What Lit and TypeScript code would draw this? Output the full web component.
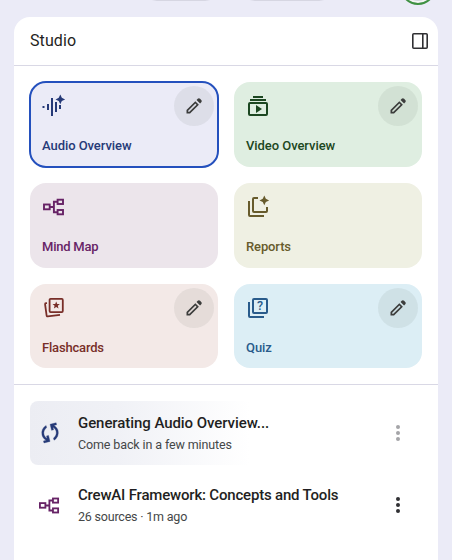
import { LitElement, html, css, svg } from "lit";
import { customElement } from "lit/decorators.js";
import { classMap } from "lit/directives/class-map.js";

const spark = (cx: number, cy: number, r: number) => {
  const k = r * 0.32;
  return svg`<path fill="currentColor" d="M${cx} ${cy - r}L${cx + k} ${cy - k}L${cx + r} ${cy}L${cx + k} ${cy + k}L${cx} ${cy + r}L${cx - k} ${cy + k}L${cx - r} ${cy}L${cx - k} ${cy - k}Z"/>`;
};

const icons = {
  audio: svg`<g fill="currentColor"><rect x=".5" y="12" width="2" height="2"/><rect x="5" y="10" width="2" height="6"/><rect x="9" y="4" width="2" height="18"/><rect x="13" y="8" width="2" height="10"/><rect x="17" y="11" width="2" height="4"/></g>${spark(18.3, 5.4, 4.8)}`,
  video: svg`<g fill="currentColor"><rect x="7" y="2" width="10" height="2"/><rect x="4" y="5" width="16" height="2"/><path d="M10 11v8l6-4Z"/></g><rect x="3" y="9" width="18" height="12" rx="1" fill="none" stroke="currentColor" stroke-width="2"/>`,
  mindmap: svg`<g fill="none" stroke="currentColor" stroke-width="1.9"><rect x="2" y="9.5" width="5.7" height="4.8"/><rect x="15.6" y="4.7" width="5.4" height="4.3"/><rect x="15.6" y="15" width="5.4" height="4.3"/><path d="M7.7 12h4.2M15.6 6.8h-3.7v10.4h3.7"/></g>`,
  reports: svg`<path fill="none" stroke="currentColor" stroke-width="2" d="M3 6v14q0 1 1 1h14M12 3H8q-1 0-1 1v12q0 1 1 1h12q1 0 1-1v-4"/>${spark(18.3, 5.4, 4.8)}`,
  flashcards: svg`<g fill="none" stroke="currentColor" stroke-width="1.8"><rect x="7.6" y="2.9" width="13.2" height="13.2" rx="1"/><path d="M5 7.1 4 7.2q-1 .1-.9 1.1l1.5 11.2q.1 1 1.1.9L18 18.9"/></g><path fill="currentColor" d="m14.2 5.4 1 2.6 2.7.1-2.1 1.7.7 2.7-2.3-1.5-2.3 1.5.7-2.7-2.1-1.7 2.7-.1Z"/>`,
  quiz: svg`<path fill="none" stroke="currentColor" stroke-width="2" d="M3 6v14q0 1 1 1h14"/><rect x="7" y="3" width="14" height="14" rx="1" fill="none" stroke="currentColor" stroke-width="2"/><text x="14" y="14.4" text-anchor="middle" font-family="Roboto, sans-serif" font-size="12.5" font-weight="500" fill="currentColor">?</text>`,
  edit: svg`<path fill="currentColor" d="M5 19h1.4l8.625-8.625-1.4-1.4L5 17.6ZM19.3 8.925l-4.25-4.2 1.4-1.4q.575-.575 1.413-.575.837 0 1.412.575l1.4 1.4q.575.575.6 1.388.025.812-.55 1.387ZM17.85 10.4 7.25 21H3v-4.25l10.6-10.6Z"/>`,
  panel: svg`<g fill="none" stroke="currentColor" stroke-width="1.6"><rect x="4.8" y="4.8" width="14.4" height="14.4" rx="1"/><path d="M14.8 5v14"/></g>`,
  more: svg`<g fill="currentColor"><circle cx="12" cy="6" r="2"/><circle cx="12" cy="12" r="2"/><circle cx="12" cy="18" r="2"/></g>`,
  sync: svg`<path fill="currentColor" stroke="currentColor" stroke-width=".3" transform="rotate(-14 12 12) translate(-.4 -.6) scale(1.04)" d="M4 20v-2h2.75l-.4-.35q-1.3-1.15-1.825-2.625Q4 13.55 4 12.05q0-2.775 1.663-4.937Q7.325 4.95 10 4.25v2.1Q8.2 7 7.1 8.562 6 10.125 6 12.05q0 1.125.425 2.187Q6.85 15.3 7.75 16.2l.25.25V14h2v6Zm10-.25v-2.1q1.8-.65 2.9-2.212Q18 13.875 18 11.95q0-1.125-.425-2.188Q17.15 8.7 16.25 7.8L16 7.55V10h-2V4h6v2h-2.75l.4.35q1.225 1.225 1.788 2.662Q20 10.45 20 11.95q0 2.775-1.663 4.938Q16.675 19.05 14 19.75Z"/>`,
};

type IconName = keyof typeof icons;

const icon = (name: IconName, cls = "") =>
  html`<svg class="icon ${cls}" viewBox="0 0 24 24" aria-hidden="true">${icons[name]}</svg>`;

interface Tool {
  id: IconName;
  label: string;
  editable: boolean;
}

const tools: Tool[] = [
  { id: "audio", label: "Audio Overview", editable: true },
  { id: "video", label: "Video Overview", editable: true },
  { id: "mindmap", label: "Mind Map", editable: false },
  { id: "reports", label: "Reports", editable: false },
  { id: "flashcards", label: "Flashcards", editable: true },
  { id: "quiz", label: "Quiz", editable: true },
];

@customElement("app-root")
export class AppRoot extends LitElement {
  static properties = { selected: { type: String } };

  declare selected: string;

  constructor() {
    super();
    this.selected = "audio";
  }

  static styles = css`
    :host {
      display: block;
      position: relative;
      box-sizing: border-box;
      height: 560px;
      padding: 17px 14px 0;
      overflow: hidden;
      background: #ebebf7;
      color: #1f1f22;
      font-family: Roboto, "Liberation Sans", sans-serif;
    }
    .icon { display: block; width: 24px; height: 24px; flex: none; }
    .pill {
      position: absolute;
      top: -31px;
      width: 80px;
      height: 32px;
      box-sizing: border-box;
      border: 1px solid #d6d6e2;
      border-radius: 16px;
    }
    .share { left: 141px; }
    .settings { left: 239px; width: 96px; }
    .avatar {
      position: absolute;
      top: -31px;
      left: 400px;
      width: 36px;
      height: 36px;
      box-sizing: border-box;
      border: 2px solid #3f9142;
      border-radius: 50%;
      background: #d5d8df;
      box-shadow: inset 0 0 0 2px #f4f6f4;
    }
    .panel {
      height: 543px;
      border-radius: 16px 16px 0 0;
      background: #fff;
    }
    header {
      display: flex;
      align-items: center;
      justify-content: space-between;
      height: 48px;
      padding: 0 6px 0 16px;
      border-bottom: 1px solid #d9d8e5;
    }
    h1 { margin: 0; font-size: 16px; font-weight: 400; line-height: 24px; letter-spacing: 0.1px; }
    .toggle { color: #303033; }
    .tools {
      display: grid;
      grid-template-columns: 188px 188px;
      grid-template-rows: 85px 85px 84px;
      gap: 16px;
      padding: 16px;
      border-bottom: 1px solid #d9d8e5;
    }
    .card {
      display: flex;
      justify-content: space-between;
      align-items: flex-start;
      box-sizing: border-box;
      padding: 4px 4px 0 12px;
      border-radius: 16px;
    }
    .body { display: flex; flex-direction: column; gap: 18px; padding-top: 8px; }
    .label {
      font-size: 13px;
      font-weight: 500;
      line-height: 20px;
      letter-spacing: -0.06px;
      white-space: nowrap;
    }
    .selected { outline: 2px solid #2450bd; outline-offset: -1px; }
    .audio { background: #ebebf7; color: #263a78; }
    .video { background: #dfeee1; color: #1c4721; }
    .mindmap { background: #ece5eb; color: #672366; }
    .mindmap .label { letter-spacing: -0.24px; }
    .reports { background: #eff0e3; color: #675b2c; }
    .reports .label { letter-spacing: -0.12px; }
    .flashcards { background: #f3e9e7; color: #782e28; }
    .flashcards .label { letter-spacing: -0.18px; }
    .quiz { background: #dceef5; color: #295b8b; }
    .edit {
      display: grid;
      place-items: center;
      width: 40px;
      height: 40px;
      border-radius: 50%;
      background: rgba(68, 71, 70, 0.08);
      color: #3c3d3c;
    }
    .small { width: 20px; height: 20px; }
    .notes { display: flex; flex-direction: column; gap: 8px; padding: 16px; }
    .note {
      display: flex;
      align-items: center;
      height: 64px;
      box-sizing: border-box;
      padding: 0 12px 0 8px;
      gap: 16px;
      border-radius: 8px;
    }
    .pending { background: linear-gradient(90deg, #ecedf3 0, #f0f1f6 22%, #fff 56%); }
    .text { flex: 1; }
    .title { font-size: 15px; font-weight: 500; line-height: 22px; white-space: nowrap; }
    .meta { padding-top: 1px; margin-bottom: -1px; font-size: 12.5px; line-height: 20px; color: #444748; white-space: nowrap; }
    .generating { letter-spacing: -0.07px; }
    .wait { letter-spacing: -0.12px; }
    .crew { letter-spacing: -0.19px; }
    .sources { letter-spacing: -0.2px; }
    .sync { color: #263a78; }
    .map { width: 23px; height: 23px; margin-right: 1px; color: #672366; }
    .more { color: #303033; }
    .pending .more { color: #a5a5a8; }
  `;

  private card(t: Tool) {
    const classes = { card: true, [t.id]: true, selected: this.selected === t.id };
    return html`<div class=${classMap(classes)} @click=${() => (this.selected = t.id)}>
      <div class="body">${icon(t.id)}<span class="label">${t.label}</span></div>
      ${t.editable ? html`<div class="edit">${icon("edit", "small")}</div>` : ""}
    </div>`;
  }

  render() {
    return html`
      <div class="pill share"></div>
      <div class="pill settings"></div>
      <div class="avatar"></div>
      <main class="panel">
        <header><h1>Studio</h1>${icon("panel", "toggle")}</header>
        <section class="tools">${tools.map((t) => this.card(t))}</section>
        <section class="notes">
          <div class="note pending">
            ${icon("sync", "sync")}
            <div class="text">
              <div class="title generating">Generating Audio Overview...</div>
              <div class="meta wait">Come back in a few minutes</div>
            </div>
            ${icon("more", "more")}
          </div>
          <div class="note">
            ${icon("mindmap", "map")}
            <div class="text">
              <div class="title crew">CrewAI Framework: Concepts and Tools</div>
              <div class="meta sources">26 sources · 1m ago</div>
            </div>
            ${icon("more", "more")}
          </div>
        </section>
      </main>
    `;
  }
}
